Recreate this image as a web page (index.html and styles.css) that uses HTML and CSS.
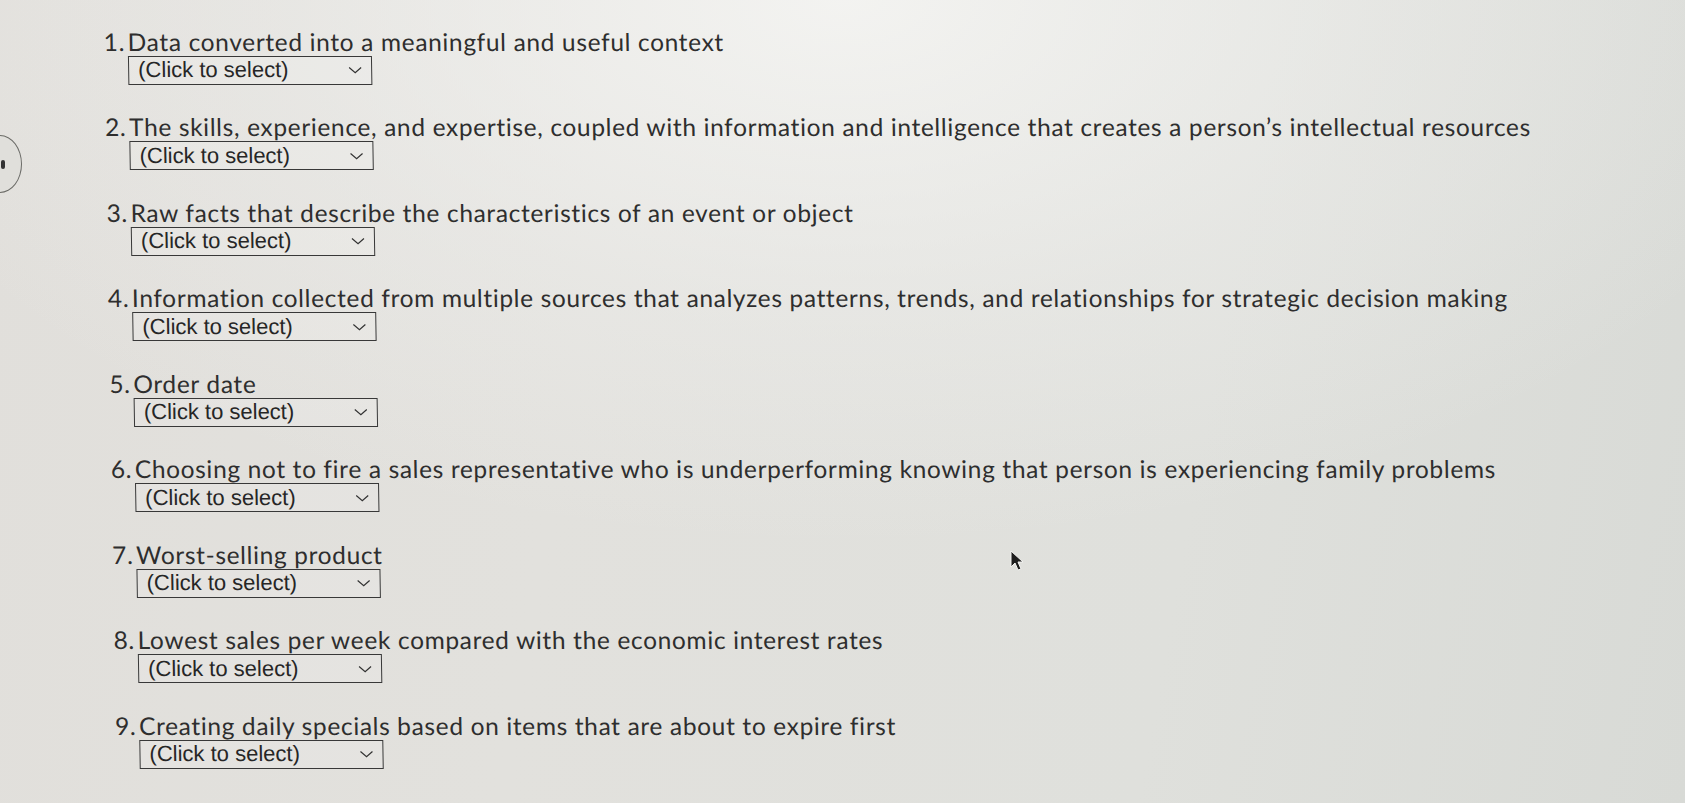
FILE: index.html
```html
<!DOCTYPE html>
<html lang="en">
<head>
<meta charset="utf-8">
<title>Matching</title>
<link rel="stylesheet" href="styles.css">
</head>
<body>
<div class="page">
  <div class="side-button"><span class="side-glyph"></span></div>
  <ol class="questions">
    <li class="q"><span class="num">1.</span><div class="body"><p class="prompt">Data converted into a meaningful and useful context</p><div class="select"><span>(Click to select)</span><svg class="chev" viewBox="0 0 14 8"><path d="M1 1.5 L7 6.8 L13 1.5"/></svg></div></div></li>
    <li class="q"><span class="num">2.</span><div class="body"><p class="prompt">The skills, experience, and expertise, coupled with information and intelligence that creates a person’s intellectual resources</p><div class="select"><span>(Click to select)</span><svg class="chev" viewBox="0 0 14 8"><path d="M1 1.5 L7 6.8 L13 1.5"/></svg></div></div></li>
    <li class="q"><span class="num">3.</span><div class="body"><p class="prompt">Raw facts that describe the characteristics of an event or object</p><div class="select"><span>(Click to select)</span><svg class="chev" viewBox="0 0 14 8"><path d="M1 1.5 L7 6.8 L13 1.5"/></svg></div></div></li>
    <li class="q"><span class="num">4.</span><div class="body"><p class="prompt">Information collected from multiple sources that analyzes patterns, trends, and relationships for strategic decision making</p><div class="select"><span>(Click to select)</span><svg class="chev" viewBox="0 0 14 8"><path d="M1 1.5 L7 6.8 L13 1.5"/></svg></div></div></li>
    <li class="q"><span class="num">5.</span><div class="body"><p class="prompt">Order date</p><div class="select"><span>(Click to select)</span><svg class="chev" viewBox="0 0 14 8"><path d="M1 1.5 L7 6.8 L13 1.5"/></svg></div></div></li>
    <li class="q"><span class="num">6.</span><div class="body"><p class="prompt">Choosing not to fire a sales representative who is underperforming knowing that person is experiencing family problems</p><div class="select"><span>(Click to select)</span><svg class="chev" viewBox="0 0 14 8"><path d="M1 1.5 L7 6.8 L13 1.5"/></svg></div></div></li>
    <li class="q"><span class="num">7.</span><div class="body"><p class="prompt">Worst-selling product</p><div class="select"><span>(Click to select)</span><svg class="chev" viewBox="0 0 14 8"><path d="M1 1.5 L7 6.8 L13 1.5"/></svg></div></div></li>
    <li class="q"><span class="num">8.</span><div class="body"><p class="prompt">Lowest sales per week compared with the economic interest rates</p><div class="select"><span>(Click to select)</span><svg class="chev" viewBox="0 0 14 8"><path d="M1 1.5 L7 6.8 L13 1.5"/></svg></div></div></li>
    <li class="q"><span class="num">9.</span><div class="body"><p class="prompt">Creating daily specials based on items that are about to expire first</p><div class="select"><span>(Click to select)</span><svg class="chev" viewBox="0 0 14 8"><path d="M1 1.5 L7 6.8 L13 1.5"/></svg></div></div></li>
  </ol>
  <svg class="cursor" viewBox="0 0 14 22"><path d="M1 1 L1 17 L5 13 L8 20 L11 19 L8 12 L13 12 Z"/></svg>
</div>
</body>
</html>
```
FILE: styles.css
```css
html, body {
  margin: 0;
  padding: 0;
}
body {
  width: 1685px;
  height: 803px;
  overflow: hidden;
  background:
    radial-gradient(ellipse 75% 85% at 50% 0%, rgba(246, 246, 244, 0.85) 0%, rgba(240, 240, 238, 0.4) 45%, rgba(240, 240, 238, 0) 80%),
    linear-gradient(100deg, #e1dfdb 0%, #e2e1dd 35%, #dfe0dc 70%, #d8dad6 100%);
  font-family: "Lato", "Open Sans", sans-serif;
  color: #2e2e2e;
}
.page {
  position: relative;
  width: 100%;
  height: 100%;
}
.questions {
  list-style: none;
  margin: 0;
  padding: 29.5px 0 0 103px;
  transform-origin: 0 0;
  transform: skewX(0.95deg);
}
.q {
  display: flex;
  margin-bottom: 30.5px;
}
.num {
  width: 24px;
  font-size: 24.5px;
  line-height: 24px;
  letter-spacing: 0.6px;
}
.body {
  display: flex;
  flex-direction: column;
  align-items: flex-start;
  gap: 2px;
}
.prompt {
  margin: 0;
  font-size: 24.5px;
  line-height: 24px;
  letter-spacing: 0.65px;
  white-space: nowrap;
}
.select {
  box-sizing: border-box;
  width: 244px;
  height: 29px;
  border: 1.5px solid #383838;
  display: flex;
  align-items: center;
  justify-content: space-between;
  padding: 0 9px 0 9px;
  font-family: "Liberation Sans", Arial, sans-serif;
  font-size: 22px;
  line-height: 24px;
  color: #262626;
  background: rgba(255, 255, 255, 0.12);
}
.chev {
  width: 14px;
  height: 8px;
  fill: none;
  stroke: #333;
  stroke-width: 1.2;
}
.side-button {
  position: absolute;
  left: -22px;
  top: 135px;
  width: 42px;
  height: 56px;
  border: 1.5px solid #6a6a66;
  border-radius: 50%;
  background: #e0dfdb;
}
.side-glyph {
  position: absolute;
  right: 16px;
  top: 24px;
  width: 4px;
  height: 9px;
  background: #333;
  border-radius: 2px;
}
.cursor {
  position: absolute;
  left: 1010px;
  top: 550px;
  width: 14px;
  height: 22px;
  fill: #1e1e1e;
  stroke: #f4f4f2;
  stroke-width: 1;
}
```
